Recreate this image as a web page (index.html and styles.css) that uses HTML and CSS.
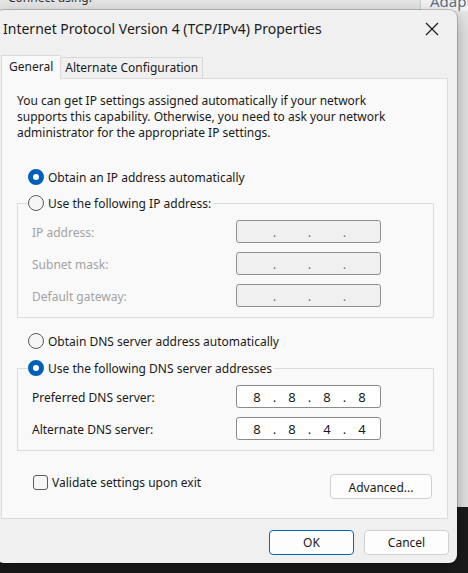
FILE: index.html
```html
<!DOCTYPE html>
<html lang="en">
<head>
    <meta charset="UTF-8">
    <meta name="viewport" content="width=device-width, initial-scale=1.0">
    <title>Internet Protocol Version 4 (TCP/IPv4) Properties</title>
    <link rel="stylesheet" href="styles.css">
</head>
<body>
    <!-- window behind the dialog -->
    <div class="backdrop">
        <span class="behind-label">Connect using:</span>
        <div class="behind-box">Adapter</div>
    </div>

    <div class="dialog">
        <div class="titlebar">
            <span class="title">Internet Protocol Version 4 (TCP/IPv4) Properties</span>
            <svg class="close" width="14" height="14" viewBox="0 0 14 14">
                <path d="M1 1 L13 13 M13 1 L1 13" stroke="#1a1a1a" stroke-width="1.2" fill="none"/>
            </svg>
        </div>

        <div class="tabs">
            <div class="tab active">General</div>
            <div class="tab">Alternate Configuration</div>
        </div>

        <div class="panel">
            <p class="intro">You can get IP settings assigned automatically if your network supports this capability. Otherwise, you need to ask your network administrator for the appropriate IP settings.</p>

            <div class="radio-row first">
                <span class="radio checked"></span>
                <span>Obtain an IP address automatically</span>
            </div>

            <fieldset class="group">
                <legend>
                    <span class="radio"></span>
                    <span>Use the following IP address:</span>
                </legend>
                <div class="field disabled">
                    <label>IP address:</label>
                    <div class="ipbox">
                        <span class="seg"></span><span class="dot">.</span><span class="seg"></span><span class="dot">.</span><span class="seg"></span><span class="dot">.</span><span class="seg"></span>
                    </div>
                </div>
                <div class="field disabled">
                    <label>Subnet mask:</label>
                    <div class="ipbox">
                        <span class="seg"></span><span class="dot">.</span><span class="seg"></span><span class="dot">.</span><span class="seg"></span><span class="dot">.</span><span class="seg"></span>
                    </div>
                </div>
                <div class="field disabled">
                    <label>Default gateway:</label>
                    <div class="ipbox">
                        <span class="seg"></span><span class="dot">.</span><span class="seg"></span><span class="dot">.</span><span class="seg"></span><span class="dot">.</span><span class="seg"></span>
                    </div>
                </div>
            </fieldset>

            <div class="radio-row dns">
                <span class="radio"></span>
                <span>Obtain DNS server address automatically</span>
            </div>

            <fieldset class="group dns-group">
                <legend>
                    <span class="radio checked"></span>
                    <span>Use the following DNS server addresses</span>
                </legend>
                <div class="field">
                    <label>Preferred DNS server:</label>
                    <div class="ipbox">
                        <span class="seg">8</span><span class="dot">.</span><span class="seg">8</span><span class="dot">.</span><span class="seg">8</span><span class="dot">.</span><span class="seg">8</span>
                    </div>
                </div>
                <div class="field">
                    <label>Alternate DNS server:</label>
                    <div class="ipbox">
                        <span class="seg">8</span><span class="dot">.</span><span class="seg">8</span><span class="dot">.</span><span class="seg">4</span><span class="dot">.</span><span class="seg">4</span>
                    </div>
                </div>
            </fieldset>

            <div class="bottom-row">
                <div class="check-row">
                    <span class="checkbox"></span>
                    <span>Validate settings upon exit</span>
                </div>
                <button class="btn advanced">Advanced...</button>
            </div>
        </div>

        <div class="actions">
            <button class="btn default">OK</button>
            <button class="btn">Cancel</button>
        </div>
    </div>
</body>
</html>
```

FILE: styles.css
```css
body {
    margin: 0;
    width: 468px;
    height: 573px;
    overflow: hidden;
    position: relative;
    background-color: #1b1b1b;
    font-family: "Noto Sans", "Open Sans", sans-serif;
    font-size: 12px;
    color: #1a1a1a;
}

/* the window behind */
.backdrop {
    position: absolute;
    left: 0;
    top: 0;
    width: 468px;
    height: 507px;
    background-color: #e6e6e6;
}
.behind-label {
    position: absolute;
    left: 8px;
    top: -11px;
    font-size: 12px;
    color: #333;
}
.behind-box {
    position: absolute;
    left: 420px;
    top: -9px;
    width: 60px;
    height: 20px;
    padding-left: 9px;
    border-left: 1px solid #cfcfcf;
    background-color: #f4f4f4;
    font-size: 15px;
    color: #5a7188;
}

/* dialog */
.dialog {
    position: absolute;
    left: -4px;
    top: 10px;
    width: 461px;
    height: 553px;
    box-sizing: border-box;
    background-color: #f0f0f0;
    border-radius: 8px;
    box-shadow: 0 0 0 1px rgba(0, 0, 0, 0.18), 0 6px 18px rgba(0, 0, 0, 0.35);
    display: flex;
    flex-direction: column;
}
.titlebar {
    height: 36px;
    display: flex;
    align-items: center;
    justify-content: space-between;
    padding: 0 18px 0 7px;
}
.title {
    font-size: 14px;
}
.close {
    display: block;
    margin-top: 1px;
}

.tabs {
    display: flex;
    align-items: flex-end;
    margin: 9px 0 0 5px;
}
.tab {
    height: 20px;
    line-height: 20px;
    padding: 0 4px;
    border: 1px solid #d9d9d9;
    border-bottom: none;
    background-color: #f0f0f0;
}
.tab.active {
    height: 23px;
    line-height: 22px;
    padding: 0 7px;
    background-color: #f9f9f9;
    position: relative;
    z-index: 1;
    margin-bottom: -1px;
    border-right: none;
}

.panel {
    margin-left: 5px;
    width: 447px;
    height: 441px;
    box-sizing: border-box;
    padding: 0 0 0 15px;
    background-color: #f9f9f9;
    border: 1px solid #dcdcdc;
}
.intro {
    margin: 14px 0 0 0;
    width: 372px;
    line-height: 16px;
}

.radio-row,
legend {
    display: flex;
    align-items: center;
    gap: 4px;
    height: 18px;
}
.radio-row {
    margin-left: 11px;
}
.radio-row.first {
    margin-top: 27px;
}
.radio-row.dns {
    margin-top: 14px;
}
.radio {
    width: 16px;
    height: 16px;
    box-sizing: border-box;
    border-radius: 50%;
    border: 1px solid #5c5c5c;
    background-color: #f6f6f6;
}
.radio.checked {
    border: 5px solid #005fb8;
    background-color: #ffffff;
}

.group {
    width: 417px;
    box-sizing: border-box;
    margin: 8px 0 0 0;
    padding: 8px 0 10px 0;
    border: 1px solid #dcdcdc;
}
.dns-group {
    margin-top: 9px;
}
legend {
    margin-left: 10px;
    padding: 0 2px 0 0;
}

.field {
    display: flex;
    align-items: center;
    padding-left: 14px;
    height: 23px;
    margin-bottom: 9px;
}
.field:last-child {
    margin-bottom: 0;
}
.field label {
    width: 204px;
    padding-top: 2px;
}
.field.disabled label {
    color: #a3a3a3;
}

.ipbox {
    width: 145px;
    height: 23px;
    box-sizing: border-box;
    border: 1px solid #8a8a8a;
    border-radius: 3px;
    background-color: #ffffff;
    display: flex;
    align-items: center;
    padding-left: 5px;
    font-size: 13px;
}
.field.disabled .ipbox {
    background-color: #f0f0f0;
    border-color: #909090;
}
.seg {
    width: 30px;
    text-align: center;
}
.dot {
    width: 5px;
    text-align: center;
}
.field.disabled .dot {
    color: #5d7282;
}

.bottom-row {
    width: 417px;
    margin-top: 23px;
    display: flex;
    justify-content: space-between;
    align-items: flex-start;
}
.check-row {
    display: flex;
    align-items: center;
    gap: 4px;
    margin-left: 16px;
    height: 16px;
}
.checkbox {
    width: 15px;
    height: 15px;
    box-sizing: border-box;
    border: 1px solid #5c5c5c;
    border-radius: 3px;
    background-color: #f6f6f6;
}

.btn {
    font-family: "Noto Sans", "Open Sans", sans-serif;
    font-size: 12px;
    color: #1a1a1a;
    height: 25px;
    width: 85px;
    padding: 0;
    border: 1px solid #d0d0d0;
    border-radius: 4px;
    background-color: #fdfdfd;
}
.btn.advanced {
    width: 102px;
    margin-right: 2px;
    padding-top: 2px;
}
.btn.default {
    border-color: #0067c0;
}

.actions {
    display: flex;
    justify-content: flex-end;
    gap: 10px;
    margin-top: 11px;
    padding-right: 8px;
}
```
